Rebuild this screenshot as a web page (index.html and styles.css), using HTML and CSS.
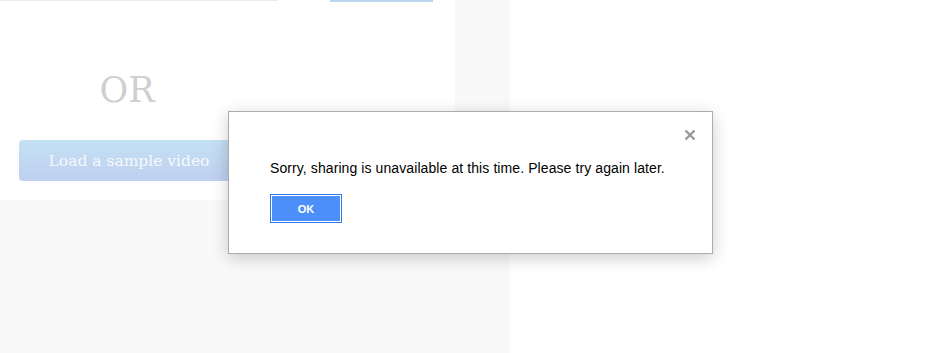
FILE: index.html
```html
<!DOCTYPE html>
<html lang="en">

<head>
    <meta charset="UTF-8">
    <title>share</title>
    <link rel="stylesheet" href="styles.css">
</head>

<body>
    <div class="page">
        <div class="panel">
            <div class="card">
                <div class="url-row">
                    <div class="url-field"></div>
                    <div class="url-btn"></div>
                </div>
                <div class="sample">
                    <div class="or">OR</div>
                    <button class="sample-btn">Load a sample video</button>
                </div>
            </div>
        </div>
    </div>
    <div class="dialog">
        <svg class="dialog-close" width="12" height="12" viewBox="0 0 12 12">
            <path d="M1.5 1.5 L10.5 10.5 M10.5 1.5 L1.5 10.5" stroke="#999" stroke-width="2.4" />
        </svg>
        <p class="dialog-text">Sorry, sharing is unavailable at this time. Please try again later.</p>
        <button class="dialog-ok">OK</button>
    </div>
</body>

</html>
```

FILE: styles.css
```css
body {
    margin: 0;
    font-family: "Liberation Sans", Arial, sans-serif;
    background: #fff;
}

.page {
    display: flex;
    height: 353px;
}

.panel {
    width: 510px;
    background: #f9f9f9;
}

.card {
    width: 455px;
    height: 200px;
    background: #fff;
}
/*top input remnant*/

.url-row {
    display: flex;
    height: 2px;
}

.url-field {
    width: 278px;
    height: 1px;
    background: #ebebeb;
}

.url-btn {
    margin-left: 52px;
    width: 103px;
    height: 2px;
    background: #bcd5ef;
}
/*sample*/

.sample {
    width: 220px;
    padding: 0 19px;
    text-align: center;
}

.or {
    margin-top: 68px;
    padding-right: 4px;
    font-family: "DejaVu Serif", serif;
    font-size: 35px;
    line-height: 40px;
    color: #cfcfcf;
}

.sample-btn {
    margin-top: 30px;
    width: 220px;
    height: 41px;
    border: 0;
    border-radius: 4px;
    background: linear-gradient(#c4e1f4, #bfcff0);
    color: #f6f9fd;
    font-family: "DejaVu Serif", serif;
    font-size: 15.5px;
}
/*dialog*/

.dialog {
    position: absolute;
    left: 228px;
    top: 111px;
    width: 483px;
    height: 141px;
    background: #fff;
    border: 1px solid #acacac;
    box-shadow: 0 4px 16px rgba(0, 0, 0, 0.2);
}

.dialog-close {
    position: absolute;
    right: 16px;
    top: 17px;
}

.dialog-text {
    margin: 48px 0 0 41px;
    font-size: 14px;
    line-height: 17px;
    letter-spacing: 0.09px;
    color: #000;
}

.dialog-ok {
    margin: 17px 0 0 41px;
    width: 72px;
    height: 29px;
    border: 1px solid #3079ed;
    box-shadow: inset 0 0 0 1px #fff;
    background: #4d8ff8;
    color: #fff;
    font-family: "Liberation Sans", Arial, sans-serif;
    font-size: 11px;
    font-weight: bold;
}
```
